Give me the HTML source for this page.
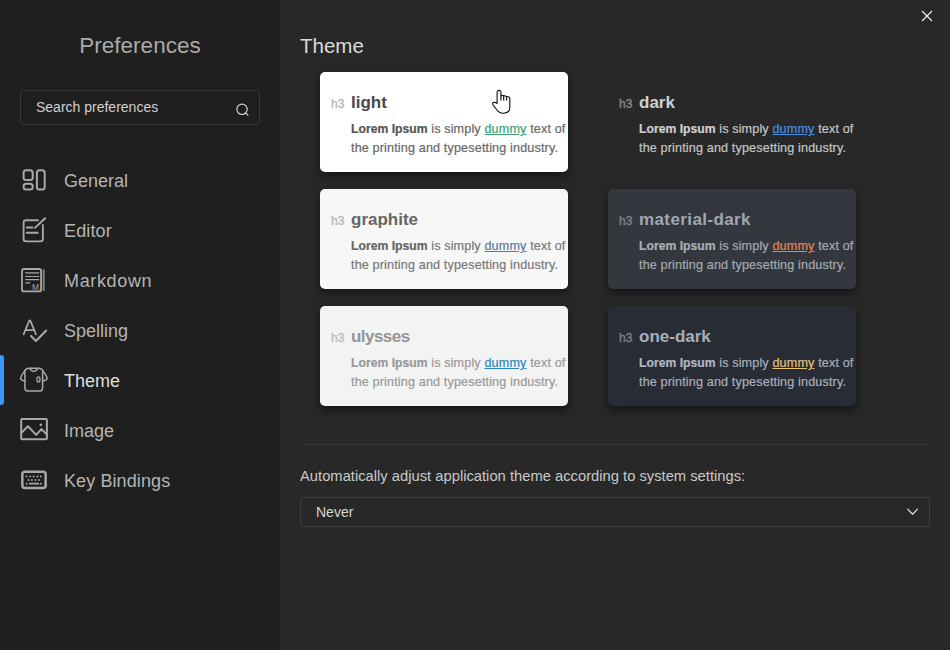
<!DOCTYPE html>
<html><head><meta charset="utf-8">
<style>
html,body{margin:0;padding:0;width:950px;height:650px;overflow:hidden;background:#282828;font-family:"Liberation Sans",sans-serif;}
.abs{position:absolute;white-space:nowrap;}
#side{position:absolute;left:0;top:0;width:280px;height:650px;background:#1f1f1f;}
#sideedge{position:absolute;left:279px;top:0;width:1px;height:650px;background:#1c1c1c;}
.title{position:absolute;left:0;width:280px;text-align:center;top:30.5px;font-size:22.5px;line-height:30px;color:#aaaaaa;}
.search{position:absolute;left:20px;top:90px;width:238px;height:33px;border:1px solid #363636;border-radius:4px;}
.search span{position:absolute;left:15px;top:0;line-height:33px;font-size:14px;color:#d0d0d0;}
.item{position:absolute;left:64px;margin-top:.6px;font-size:18px;line-height:50px;color:#b4b4b4;}
.item.active{color:#dedede;}
#bar{position:absolute;left:0;top:355px;width:4px;height:50px;background:#3d98f5;border-radius:0 3px 3px 0;}
#main{position:absolute;left:280px;top:0;width:670px;height:650px;}
.h{position:absolute;left:300px;top:31px;font-size:20.5px;line-height:30px;color:#dcdcdc;}
.card{position:absolute;width:248px;height:100px;border-radius:5px;box-shadow:0 4px 10px rgba(0,0,0,.5);overflow:hidden;}
.card .h3{position:absolute;left:11px;top:21.5px;font-size:12px;line-height:20px;}
.card .t{position:absolute;left:31px;top:21px;font-size:17px;line-height:20px;font-weight:bold;}
.card .p{position:absolute;left:31px;top:48px;font-size:12.6px;line-height:19px;letter-spacing:.15px;white-space:nowrap;}
.card .p b{font-size:12.2px;letter-spacing:0;}
.card .p{-webkit-text-stroke:.2px currentColor;}
.card .h3{-webkit-text-stroke:.4px currentColor;}
.card .p u{text-decoration:underline;text-underline-offset:1px;}
.divider{position:absolute;left:300px;top:444px;width:630px;height:1px;background:#353535;}
.label{position:absolute;left:300px;top:465.7px;font-size:14.75px;line-height:20px;color:#c8c8c8;}
.select{position:absolute;left:300px;top:497px;width:628px;height:28px;border:1px solid #3c3c3c;border-radius:3px;}
.select span{position:absolute;left:15px;top:0;line-height:28px;font-size:14px;color:#d4d4d4;}
</style></head>
<body>
<div id="side"></div>
<div id="sideedge"></div>
<div class="title">Preferences</div>
<div class="search"><span>Search preferences</span></div>
<div id="bar"></div>
<div class="item" style="top:155px">General</div>
<div class="item" style="top:205px;letter-spacing:.15px">Editor</div>
<div class="item" style="top:255px;letter-spacing:.65px">Markdown</div>
<div class="item" style="top:305px">Spelling</div>
<div class="item active" style="top:355px">Theme</div>
<div class="item" style="top:405px">Image</div>
<div class="item" style="top:455px;letter-spacing:.1px">Key Bindings</div>

<svg class="abs" style="left:0;top:0" width="950" height="650" viewBox="0 0 950 650" fill="none" stroke-linecap="round" stroke-linejoin="round">
 <g stroke="#a8a8a8" stroke-width="2">
  <!-- general -->
  <rect x="23.6" y="170.2" width="9.1" height="9.7" rx="2.5"/>
  <rect x="23.6" y="183.8" width="9.1" height="5.7" rx="2.5"/>
  <rect x="36.9" y="170.2" width="7.8" height="19.3" rx="2.5"/>
  <!-- editor -->
  <path d="M38,220.2 H26 Q23.6,220.2 23.6,222.6 V238.9 Q23.6,241.3 26,241.3 H40.5 Q42.9,241.3 42.9,238.9 V225" stroke-width="1.85"/>
  <path d="M35,227.9 L45.1,218.3"/>
  <path d="M26.8,227.4 H32.5 M26.8,232.7 H37.7"/>
  <!-- spelling -->
  <path d="M23.6,334.3 L29.2,320.9 Q29.8,319.8 30.4,320.9 L36,334.3 M25.5,330.2 H34" stroke-width="1.75"/>
  <path d="M31,336 L35.9,340.9 L46.2,330.6" stroke-width="2.1"/>
  <!-- image -->
  <rect x="21.2" y="419" width="25.7" height="20.2" rx="1"/>
  <path d="M21.2,433.1 L27.9,426.3 L36.2,434.9 L41.4,429.1 L46.9,434.5"/>
 </g>
 <!-- markdown -->
 <g stroke="#a8a8a8">
  <rect x="22" y="269" width="19.1" height="22.4" rx="2" stroke-width="1.8"/>
  <path d="M25.7,272.8 H38.7 M25.7,276.5 H38.7 M25.7,279.6 H38.7 M25.7,282.8 H29.7" stroke-width="1.2"/>
  <path d="M43.7,269.5 V291" stroke-width="2" stroke-linecap="butt" opacity=".7"/>
 </g>
 <text x="32" y="290" font-family="Liberation Sans" font-size="8.5" fill="#a8a8a8">M</text>
 <circle cx="40.8" cy="424.8" r="1.3" fill="#a8a8a8"/>
 <!-- theme shirt -->
 <g stroke="#a8a8a8" stroke-width="1.5">
 <path d="M24.9,372 V388 Q24.9,391.1 28,391.1 H39.5 Q42.6,391.1 42.6,388 V372"/>
 <path d="M24.4,371.4 Q25.8,368.2 28.8,368.2 H38.9 Q41.9,368.2 43.3,371.4"/>
 <path d="M29.6,368.5 Q33.7,374.5 37.9,368.5"/>
 <path d="M24.4,371.4 Q21.6,375 20.7,377.6 Q20.3,379 21.6,379.9 L24.9,381.3"/>
 <path d="M43.3,371.4 Q46.1,375 47,377.6 Q47.4,379 46.1,379.9 L42.6,381.3"/>
 <ellipse cx="38.4" cy="379.5" rx="1.55" ry="2.55" stroke-width="1.3"/>
 </g>
 <!-- keyboard -->
 <rect x="22.35" y="471.75" width="23.3" height="16.2" rx="2.5" stroke="#a8a8a8" stroke-width="2.5"/>
 <g fill="#a8a8a8">
  <circle cx="26.6" cy="476.5" r=".95"/><circle cx="30.3" cy="476.5" r=".95"/><circle cx="33.7" cy="476.5" r=".95"/><circle cx="37.4" cy="476.5" r=".95"/><circle cx="40.8" cy="476.5" r=".95"/>
  <circle cx="28.5" cy="480" r=".95"/><circle cx="31.9" cy="480" r=".95"/><circle cx="35.5" cy="480" r=".95"/><circle cx="39" cy="480" r=".95"/>
  <circle cx="26.6" cy="483.7" r=".95"/><circle cx="40.8" cy="483.7" r=".95"/>
 </g>
 <path d="M29.7,483.7 H38.3" stroke="#a8a8a8" stroke-width="1.8"/>
 <!-- search -->
 <circle cx="242" cy="109.3" r="5.2" stroke="#d8d8d8" stroke-width="1.15"/>
 <path d="M245.9,113.2 L247.9,115.2" stroke="#d8d8d8" stroke-width="1.15"/>
 <!-- close -->
 <path d="M922,11 L932,21 M932,11 L922,21" stroke="#f0f0f0" stroke-width="1.15" stroke-linecap="butt"/>
 <!-- chevron -->
 <path d="M907.8,509.3 L912.6,514.2 L917.4,509.3" stroke="#cfcfcf" stroke-width="1.3"/>
</svg>

<div class="h">Theme</div>

<div class="card" style="left:320px;top:72px;background:#fff">
 <div class="h3 abs" style="color:#b8b8b8">h3</div>
 <div class="t abs" style="color:#4a4a4a">light</div>
 <div class="p" style="color:#676767"><b style="color:#555">Lorem Ipsum</b> is simply <u style="color:#3b9f73">dummy</u> text of<br>the printing and typesetting industry.</div>
</div>
<div class="card" style="left:608px;top:72px;background:#282828;box-shadow:none">
 <div class="h3 abs" style="color:#868686">h3</div>
 <div class="t abs" style="color:#cfcfcf">dark</div>
 <div class="p" style="color:#c6c6c6"><b style="color:#cfcfcf">Lorem Ipsum</b> is simply <u style="color:#4a90e2">dummy</u> text of<br>the printing and typesetting industry.</div>
</div>
<div class="card" style="left:320px;top:189px;background:#f7f7f7">
 <div class="h3 abs" style="color:#bbb">h3</div>
 <div class="t abs" style="color:#666">graphite</div>
 <div class="p" style="color:#777"><b style="color:#666">Lorem Ipsum</b> is simply <u style="color:#5b7aa0">dummy</u> text of<br>the printing and typesetting industry.</div>
</div>
<div class="card" style="left:608px;top:189px;background:#34383e">
 <div class="h3 abs" style="color:#7b8088">h3</div>
 <div class="t abs" style="color:#a0a7b0;letter-spacing:.4px">material-dark</div>
 <div class="p" style="color:#a4a9b0"><b style="color:#a9b0b8">Lorem Ipsum</b> is simply <u style="color:#e7834e">dummy</u> text of<br>the printing and typesetting industry.</div>
</div>
<div class="card" style="left:320px;top:306px;background:#f3f3f3">
 <div class="h3 abs" style="color:#c0c0c0">h3</div>
 <div class="t abs" style="color:#949494;letter-spacing:-.55px">ulysses</div>
 <div class="p" style="color:#999"><b style="color:#999">Lorem Ipsum</b> is simply <u style="color:#2a86b8">dummy</u> text of<br>the printing and typesetting industry.</div>
</div>
<div class="card" style="left:608px;top:306px;background:#282c34">
 <div class="h3 abs" style="color:#7c8088">h3</div>
 <div class="t abs" style="color:#a8afbb">one-dark</div>
 <div class="p" style="color:#a8afbb"><b style="color:#b0b7c2">Lorem Ipsum</b> is simply <u style="color:#e5c07b">dummy</u> text of<br>the printing and typesetting industry.</div>
</div>

<div class="divider"></div>
<div class="label">Automatically adjust application theme according to system settings:</div>
<div class="select"><span>Never</span></div>

<!-- cursor -->
<svg class="abs" style="left:485px;top:82px" width="35" height="35" viewBox="0 0 35 35">
 <path fill="#fff" stroke="#111" stroke-width="1.1" stroke-linejoin="round" d="M12.1,21.5 V10 Q12.1,8.4 14,8.4 Q15.9,8.4 15.9,10 V13.8 Q17.3,13 18.7,13.8 Q20.1,13.4 21.6,14.6 Q24.8,14.3 24.8,16.6 V25.5 Q24.8,31.2 18,31.2 Q14.2,31.2 11.5,27.5 L7.9,22.6 Q7.1,21.2 8.3,20.6 Q10.2,19.9 12.1,21.5 Z"/>
 <path fill="none" stroke="#111" stroke-width="1.2" d="M15.9,13.8 V18.6 M18.7,13.8 V18.6 M21.6,14.6 V18.6"/>
</svg>
</body></html>
